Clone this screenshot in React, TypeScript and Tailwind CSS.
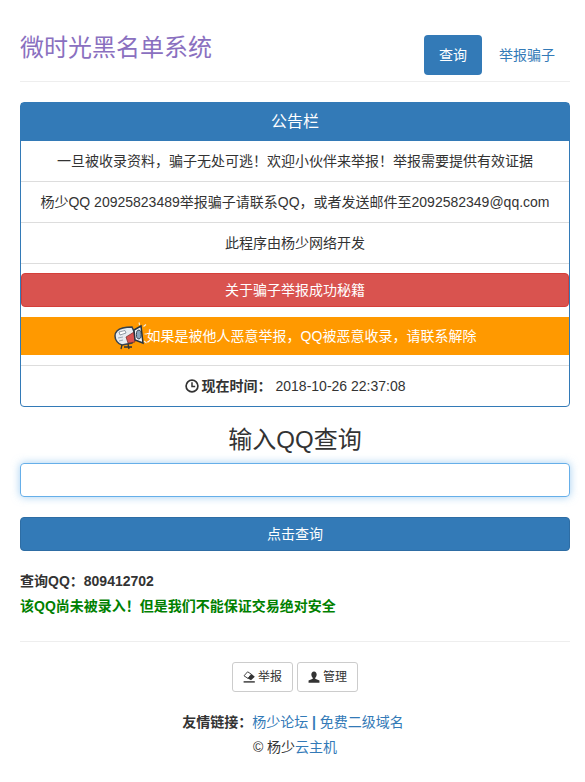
const font = "font-['Liberation_Sans','Noto_Sans_CJK_SC',sans-serif]"

function ClockIcon() {
  return (
    <svg width="14" height="14" viewBox="0 0 14 14" fill="none" stroke="#333" className="inline-block">
      <circle cx="7" cy="7" r="5.9" strokeWidth="1.7" />
      <path d="M7 3.2V7.4H10.2" strokeWidth="1.5" />
    </svg>
  )
}

function EraseIcon() {
  return (
    <svg width="12" height="12" viewBox="0 0 12 12" fill="#333">
      <path d="M4.6 0.8L1 4.8 5 7.4 8.4 3.2Z" fill="#fff" stroke="#333" strokeWidth="0.9" />
      <path d="M8.6 3L11.8 5.8 8 9.2 4.8 7.4Z" />
      <path d="M0.6 10.2H11.8V11.6H0.6Z" />
    </svg>
  )
}

function UserIcon() {
  return (
    <svg width="12" height="12" viewBox="0 0 13 13" fill="#333">
      <path d="M6.5 0.5C8.4 0.5 9.4 2 9.4 3.9 9.4 5.6 8.6 7 7.8 7.6V8.4L12.4 10.4V12.6H0.6V10.4L5.2 8.4V7.6C4.4 7 3.6 5.6 3.6 3.9 3.6 2 4.6 0.5 6.5 0.5Z" />
    </svg>
  )
}

function Mascot() {
  return (
    <svg width="33" height="28" viewBox="0 0 33 28" className="shrink-0">
      <path d="M3 9C6 6 12 5 18 5L22 14 18 21 8 23C4 22 1 18 1 14 1 12 2 10 3 9Z" fill="#e6ebf0" stroke="#34414f" strokeWidth="1.5" />
      <path d="M5 10L11 8.5 12 11 6 13Z" fill="#fff" stroke="#6a7784" strokeWidth="0.7" />
      <path d="M4 16L9 15M5 19L9 18" stroke="#8a96a2" strokeWidth="0.8" />
      <path d="M12 15L20 10 21 20 14 21Z" fill="#d9534f" stroke="#6e2a27" strokeWidth="0.7" />
      <path d="M20 8L27 4 29 21 21 18Z" fill="#f4f6f9" stroke="#27333f" strokeWidth="1.5" />
      <ellipse cx="24.8" cy="12.5" rx="2.4" ry="4.4" fill="#8aa4bc" stroke="#27333f" strokeWidth="0.9" />
      <path d="M25 0.5L25.6 3M29.5 4.5L32 2.5M30.5 12H33M30 19L32.5 21" stroke="#f4f1e0" strokeWidth="1.1" />
      <path d="M8 23L7 27M14 22L15 27M10 25H18" stroke="#27333f" strokeWidth="1.3" />
    </svg>
  )
}

const rowClass = "flex items-center justify-center h-[41px] border-b border-[#ddd] text-sm text-[#333]"

export default function App() {
  return (
    <div className={`${font} min-h-screen bg-white pl-5 pr-[15px] text-sm text-[#333]`}>
      <div className="flex items-start justify-between h-[82px] border-b border-[#eee] pt-[35px]">
        <h3 className="text-2xl leading-[26px] text-[#8a70c0]">微时光黑名单系统</h3>
        <div className="flex gap-0.5">
          <a className="flex items-center justify-center w-[58px] h-10 rounded bg-[#337ab7] text-white">查询</a>
          <a className="flex items-center justify-center w-[86px] h-10 rounded text-[#337ab7]">举报骗子</a>
        </div>
      </div>

      <div className="mt-5 rounded border border-[#337ab7]">
        <div className="flex items-center justify-center h-[38px] bg-[#337ab7] text-base text-white">公告栏</div>
        <div className={rowClass}>一旦被收录资料，骗子无处可逃！欢迎小伙伴来举报！举报需要提供有效证据</div>
        <div className={rowClass}>杨少QQ 20925823489举报骗子请联系QQ，或者发送邮件至2092582349@qq.com</div>
        <div className={rowClass}>此程序由杨少网络开发</div>
        <div className="pt-[9px] pb-[10px]">
          <a className="flex items-center justify-center h-[34px] rounded bg-[#d9534f] border border-[#d43f3a] text-white">关于骗子举报成功秘籍</a>
        </div>
        <div className="flex items-center justify-center h-[38px] bg-[#ff9900] text-white">
          <Mascot />
          <span>如果是被他人恶意举报，QQ被恶意收录，请联系解除</span>
        </div>
        <div className="mt-[10px] flex items-center justify-center gap-[3px] h-[41px] border-t border-[#ddd]">
          <ClockIcon />
          <b>现在时间：</b>
          <span className="ml-px">2018-10-26 22:37:08</span>
        </div>
      </div>

      <h2 className="mt-[15px] text-center text-2xl leading-[36px] text-[#333]">输入QQ查询</h2>
      <input className="mt-[5px] block w-full h-[34px] rounded border border-[#66afe9] shadow-[0_0_8px_rgba(102,175,233,0.6)] outline-none" />
      <button className="mt-[20px] block w-full h-[34px] rounded border border-[#2e6da4] bg-[#337ab7] text-white">点击查询</button>

      <div className="mt-[20px] font-bold leading-5">查询QQ：809412702</div>
      <div className="mt-[5px] font-bold leading-5 text-[#008000]">该QQ尚未被录入！但是我们不能保证交易绝对安全</div>

      <div className="mt-[25px] border-t border-[#eee] pt-5 flex justify-center gap-1">
        <a className="flex items-center justify-center gap-[3px] w-[61px] h-[30px] rounded-[3px] border border-[#ccc] text-xs">
          <EraseIcon />举报
        </a>
        <a className="flex items-center justify-center gap-[3px] w-[61px] h-[30px] rounded-[3px] border border-[#ccc] text-xs">
          <UserIcon />管理
        </a>
      </div>

      <div className="mt-[20px] pr-1 text-center leading-5">
        <b>友情链接：</b>
        <a className="text-[#337ab7]">杨少论坛</a> <b className="text-[#337ab7]">|</b>{' '}
        <a className="text-[#337ab7]">免费二级域名</a>
      </div>
      <div className="mt-[5px] text-center leading-5">
        © 杨少<a className="text-[#337ab7]">云主机</a>
      </div>
    </div>
  )
}
